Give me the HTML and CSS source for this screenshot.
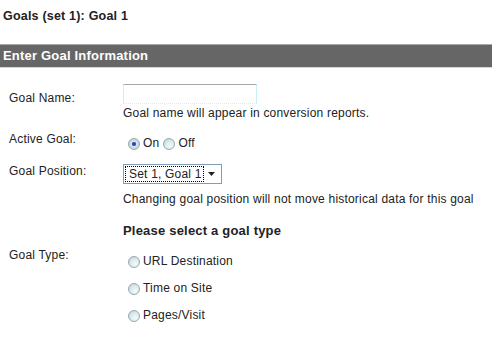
FILE: index.html
```html
<!DOCTYPE html>
<html lang="en">
<head>
  <meta charset="UTF-8" />
  <title>Goal Settings</title>
  <link rel="stylesheet" href="styles.css">
</head>
<body>

<h1 class="page-title">Goals (set 1): Goal 1</h1>

<div class="section-bar">Enter Goal Information</div>

<div class="goal-form">
  <div class="form-row row-name">
    <div class="form-label">Goal Name:</div>
    <div class="form-field">
      <input type="text" class="text-input" />
      <div class="hint">Goal name will appear in conversion reports.</div>
    </div>
  </div>

  <div class="form-row row-active">
    <div class="form-label">Active Goal:</div>
    <div class="form-field radios-inline">
      <label class="radio"><input type="radio" name="active" checked /> On</label>
      <label class="radio"><input type="radio" name="active" /> Off</label>
    </div>
  </div>

  <div class="form-row row-position">
    <div class="form-label">Goal Position:</div>
    <div class="form-field">
      <div class="fake-select">
        <span class="fake-select-value">Set 1, Goal 1</span>
        <span class="fake-select-arrow">
          <svg width="7" height="4" viewBox="0 0 7 4"><path d="M0 0h7L3.5 4z" fill="#222"/></svg>
        </span>
      </div>
      <div class="hint hint-position">Changing goal position will not move historical data for this goal</div>
    </div>
  </div>

  <div class="form-row row-type">
    <div class="form-label">Goal Type:</div>
    <div class="form-field">
      <div class="type-heading">Please select a goal type</div>
      <div class="radios-stack">
        <label class="radio"><input type="radio" name="type" /> URL Destination</label>
        <label class="radio"><input type="radio" name="type" /> Time on Site</label>
        <label class="radio"><input type="radio" name="type" /> Pages/Visit</label>
      </div>
    </div>
  </div>
</div>

</body>
</html>
```

FILE: styles.css
```css
* {
  margin: 0;
  padding: 0;
  box-sizing: border-box;
}
body {
  background: #fff;
  color: #222;
  font-family: 'Liberation Sans', Arial, sans-serif;
  font-size: 12px;
  letter-spacing: 0.2px;
}
.page-title {
  font-size: 12.5px;
  font-weight: bold;
  line-height: 14px;
  padding: 9px 0 0 3px;
  height: 44px;
}
.section-bar {
  background: #666;
  border-top: 1px solid #a8a8a8;
  border-bottom: 1px solid #d4d4d4;
  color: #fff;
  font-weight: bold;
  font-size: 13px;
  line-height: 22px;
  height: 24px;
  padding-left: 3px;
}
.goal-form {
  padding-top: 16px;
}
.form-row {
  display: flex;
}
.form-label {
  width: 123px;
  padding-left: 9px;
  line-height: 14px;
}
.form-field {
  flex: 1;
}
.row-name .form-label {
  padding-top: 7px;
}
.text-input {
  display: block;
  width: 134px;
  height: 20px;
  border: 1px solid #c8f2f6;
  border-top-color: #a8a8a8;
  border-bottom-style: dotted;
  outline: none;
}
.hint {
  line-height: 14px;
  margin-top: 2px;
}
.row-active {
  margin-top: 12px;
}
.radios-inline {
  display: flex;
  gap: 4px;
  padding-top: 4px;
  padding-left: 5px;
}
.radio {
  display: flex;
  align-items: center;
  gap: 3px;
  line-height: 14px;
}
.radio input {
  appearance: none;
  width: 12px;
  height: 12px;
  border-radius: 50%;
  border: 1px solid #98a8b4;
  background: radial-gradient(circle at 65% 70%, #f4fbfb 0, #d8e8ea 55%, #b8c8cc 100%);
  position: relative;
  top: 1px;
}
.radio input:checked {
  background: radial-gradient(circle at 50% 50%, #1c3f8c 0, #2f5fc4 25%, #d8e4ea 35%, #b8c8cc 100%);
}
.row-position {
  margin-top: 14px;
}
.fake-select {
  display: inline-flex;
  align-items: center;
  height: 20px;
  border: 1px solid #7f9db9;
  padding: 1px;
}
.fake-select-value {
  border: 1px dotted #000;
  line-height: 14px;
  padding: 0 1px 0 3px;
}
.fake-select-arrow {
  display: flex;
  align-items: center;
  justify-content: center;
  width: 16px;
  height: 16px;
}
.hint-position {
  margin-top: 8px;
}
.row-type .form-label {
  padding-top: 42px;
}
.type-heading {
  font-size: 13px;
  font-weight: bold;
  line-height: 16px;
  margin-top: 17px;
}
.radios-stack {
  display: flex;
  flex-direction: column;
  gap: 13px;
  padding-left: 5px;
  padding-top: 15px;
}
```
